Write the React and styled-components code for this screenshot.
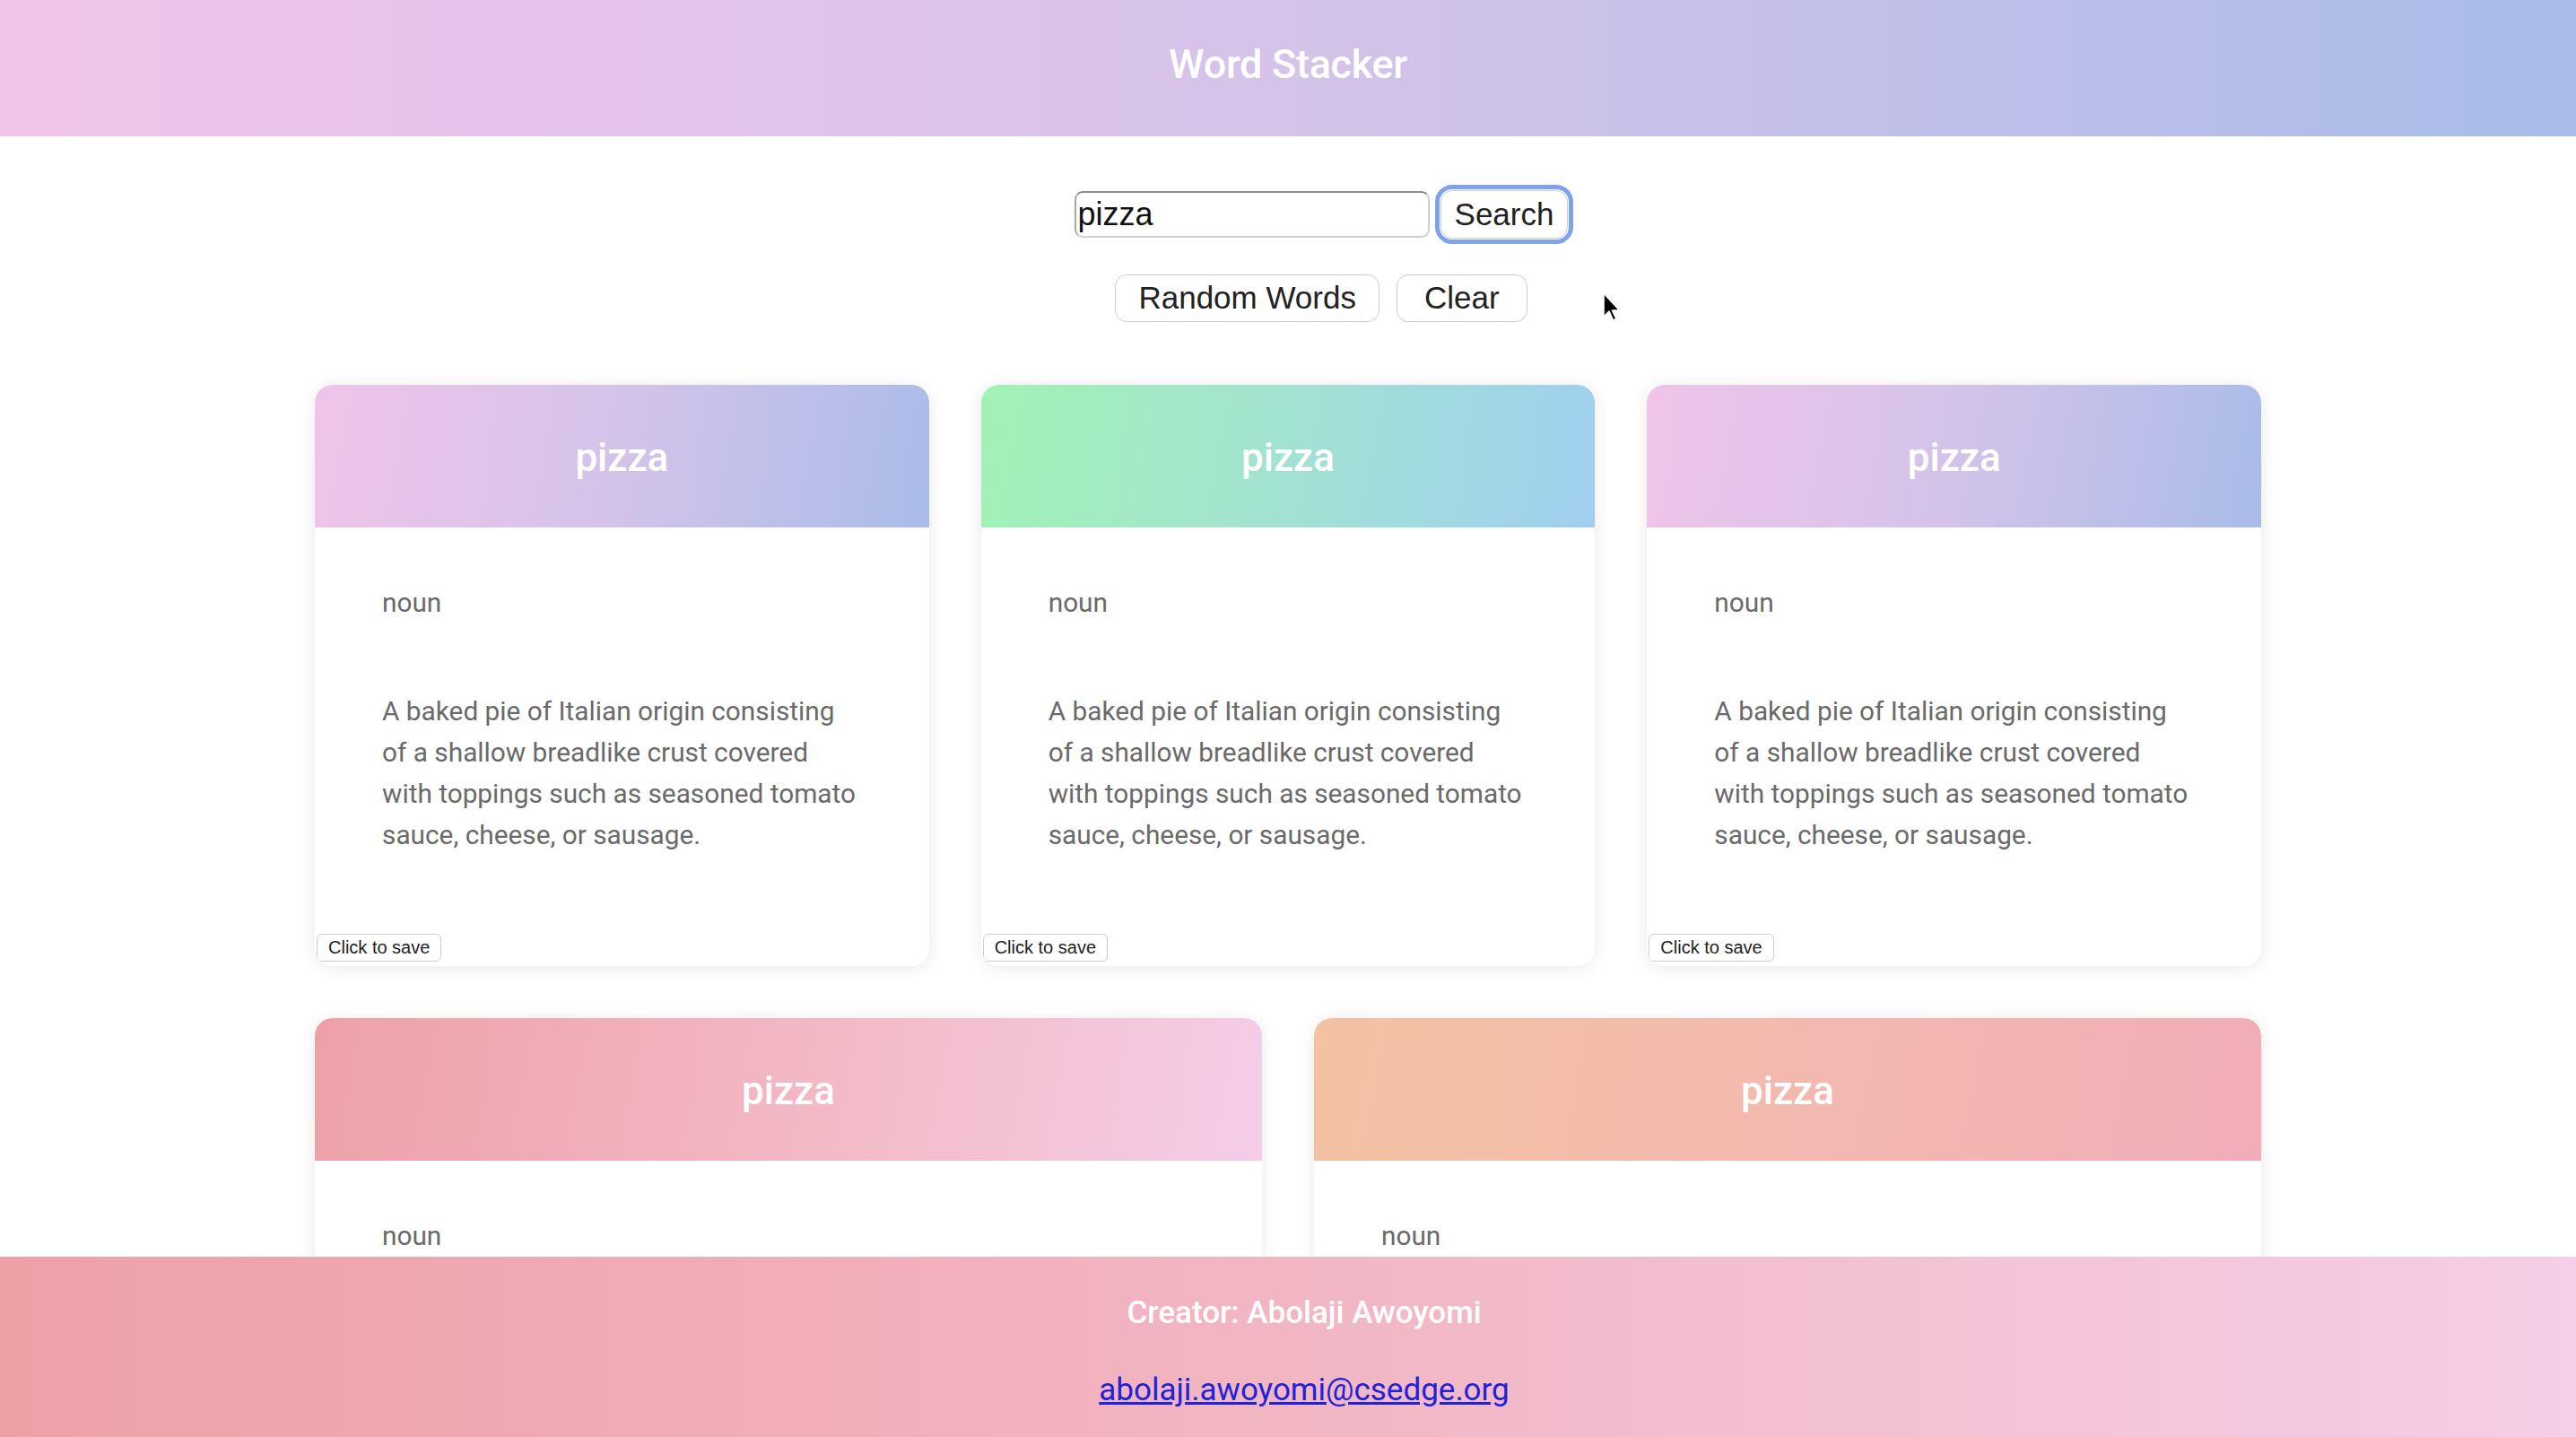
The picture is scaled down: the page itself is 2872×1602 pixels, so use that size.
import React from "react";
import styled, { createGlobalStyle } from "styled-components";

const Global = createGlobalStyle`
  html, body { margin: 0; padding: 0; background: #ffffff; }
  body { font-family: Roboto, "Liberation Sans", Arial, sans-serif; }
  * { box-sizing: border-box; }
`;

const Page = styled.div`
  min-height: 100vh;
  padding-bottom: 240px;
  position: relative;
`;

const Header = styled.header`
  height: 152px;
  display: flex;
  align-items: center;
  justify-content: center;
  background: linear-gradient(to right, #f1c4e9 0%, #d5c3e9 50%, #a9bce9 100%);
`;

const Title = styled.h1`
  margin: 0;
  font-family: Roboto, sans-serif;
  font-weight: 500;
  font-size: 45px;
  color: #ffffff;
  letter-spacing: -0.3px;
  padding-bottom: 10px;
`;

const Controls = styled.div`
  display: flex;
  flex-direction: column;
  align-items: center;
  gap: 39px;
  padding: 60px 0 0 74px;
`;

const Row = styled.div`
  display: flex;
  align-items: center;
  gap: ${(p) => p.$gap}px;
  height: 54px;
`;

const SearchInput = styled.input`
  width: 396px;
  height: 52px;
  font-family: "Liberation Sans", Arial, sans-serif;
  font-size: 36px;
  color: #111;
  padding: 0 2px;
  border: 2px solid #cfcfcf;
  border-top-color: #8a8a8a;
  border-left-color: #a9a9a9;
  border-radius: 9px;
  background: #fff;
  outline: none;
`;

const Button = styled.button`
  height: ${(p) => p.$h}px;
  padding: 0 ${(p) => p.$pad}px;
  font-family: "Liberation Sans", Arial, sans-serif;
  font-size: ${(p) => p.$size}px;
  color: #222;
  background: #ffffff;
  border: 1.5px solid #cdcdcd;
  border-radius: ${(p) => p.$r}px;
  cursor: pointer;
  outline: ${(p) => (p.$focus ? "5px solid #7fa2ec" : "none")};
  outline-offset: 1px;
`;

const Grid = styled.main`
  width: 2170px;
  margin: 70px auto 0;
  display: flex;
  flex-wrap: wrap;
  gap: 58px;
`;

const Card = styled.section`
  flex: 1 1 600px;
  display: flex;
  flex-direction: column;
  background: #ffffff;
  border-radius: 20px;
  overflow: hidden;
  box-shadow: 0 2px 18px rgba(0, 0, 0, 0.09);
`;

const CardHead = styled.div`
  height: 159px;
  display: flex;
  align-items: center;
  justify-content: center;
  background: ${(p) => p.$bg};
`;

const Word = styled.h2`
  margin: 0;
  font-family: Roboto, sans-serif;
  font-weight: 500;
  font-size: 44px;
  color: #ffffff;
  padding-top: 2px;
`;

const CardBody = styled.div`
  display: flex;
  flex-direction: column;
  padding: 61px 75px 0;
  color: #6a6a6a;
  font-family: Roboto, sans-serif;
  font-size: 29.8px;
  line-height: 46px;
`;

const Pos = styled.p`
  margin: 0;
`;

const Definition = styled.p`
  margin: 75px 0 0;
  max-width: 540px;
`;

const SaveRow = styled.div`
  padding: 87px 2px 5px;
  display: flex;
`;

const Footer = styled.footer`
  position: fixed;
  left: 0;
  right: 0;
  bottom: 0;
  height: 201px;
  display: flex;
  flex-direction: column;
  align-items: center;
  padding: 42px 0 0 36px;
  gap: 44px;
  background: linear-gradient(to right, #eea0a7 0%, #f2b6c3 50%, #f5cee7 100%);
  font-family: Roboto, sans-serif;
  font-size: 35px;
  line-height: 42px;
`;

const Creator = styled.p`
  margin: 0;
  color: #ffffff;
  font-weight: 500;
`;

const Mail = styled.a`
  color: #1e22d8;
  text-decoration: underline;
`;

const Pointer = styled.svg`
  position: absolute;
  left: 1786px;
  top: 326px;
  pointer-events: none;
`;

const gradients = [
  "linear-gradient(100deg, #f1c4e9 0%, #d3c3e9 50%, #a9bce9 100%)",
  "linear-gradient(100deg, #a3f2b5 0%, #a2e2d2 50%, #a0cff0 100%)",
  "linear-gradient(100deg, #f1c4e9 0%, #d3c3e9 50%, #a9bce9 100%)",
  "linear-gradient(100deg, #eea0a7 0%, #f3bcc9 60%, #f5cde9 100%)",
  "linear-gradient(100deg, #f3c2a1 0%, #f3b8b0 55%, #f1adb8 100%)",
];

const definition =
  "A baked pie of Italian origin consisting of a shallow breadlike crust covered with toppings such as seasoned tomato sauce, cheese, or sausage.";

export default function App() {
  return (
    <Page>
      <Global />
      <Header>
        <Title>Word Stacker</Title>
      </Header>
      <Controls>
        <Row $gap={12}>
          <SearchInput defaultValue="pizza" />
          <Button $h={54} $pad={15} $size={35} $r={13} $focus>
            Search
          </Button>
        </Row>
        <Row $gap={19}>
          <Button $h={53} $pad={25} $size={35} $r={13}>
            Random Words
          </Button>
          <Button $h={53} $pad={30} $size={35} $r={13}>
            Clear
          </Button>
        </Row>
      </Controls>
      <Grid>
        {gradients.map((g, i) => (
          <Card key={i}>
            <CardHead $bg={g}>
              <Word>pizza</Word>
            </CardHead>
            <CardBody>
              <Pos>noun</Pos>
              <Definition>{definition}</Definition>
            </CardBody>
            <SaveRow>
              <Button $h={31} $pad={12} $size={20} $r={6}>
                Click to save
              </Button>
            </SaveRow>
          </Card>
        ))}
      </Grid>
      <Pointer width="22" height="34" viewBox="0 0 22 34">
        <path
          d="M2 1 L2 27 L8 21 L12.5 31 L16 29.5 L11.5 20 L19.5 20 Z"
          fill="#000"
          stroke="#fff"
          strokeWidth="1.6"
          strokeLinejoin="round"
        />
      </Pointer>
      <Footer>
        <Creator>Creator: Abolaji Awoyomi</Creator>
        <Mail href="mailto:abolaji.awoyomi@csedge.org">abolaji.awoyomi@csedge.org</Mail>
      </Footer>
    </Page>
  );
}
